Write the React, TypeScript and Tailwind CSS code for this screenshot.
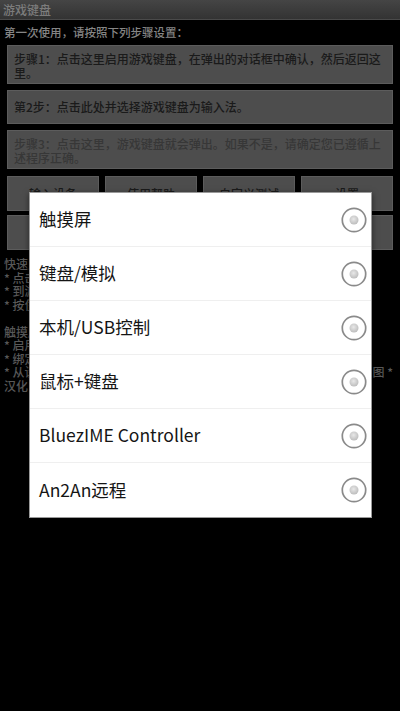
import React from "react";

const font = { fontFamily: '"Noto Sans CJK SC", "Noto Sans", sans-serif' };

function Radio() {
  return (
    <svg width="26" height="26" viewBox="0 0 26 26" className="shrink-0">
      <defs>
        <radialGradient id="rg" cx="45%" cy="40%" r="60%">
          <stop offset="0%" stopColor="#e8e8e8" />
          <stop offset="100%" stopColor="#bdbdbd" />
        </radialGradient>
      </defs>
      <circle cx="13" cy="13" r="11.7" fill="#fff" stroke="#8a8a8a" strokeWidth="1.7" />
      <circle cx="13" cy="13" r="4.5" fill="url(#rg)" />
    </svg>
  );
}

const options = [
  "触摸屏",
  "键盘/模拟",
  "本机/USB控制",
  "鼠标+键盘",
  "BluezIME Controller",
  "An2An远程",
];

export default function App() {
  return (
    <div className="relative w-[400px] h-[711px] overflow-hidden bg-black" style={font}>
      {/* title bar */}
      <div className="h-[20px] bg-gradient-to-b from-[#454545] to-[#333333] border-b border-[#4a4a4a] flex items-center px-[3px]">
        <span className="text-[12px] leading-none font-medium text-[#7c7c7c]">游戏键盘</span>
      </div>
      <div className="px-[4px] pt-[5px] h-[25px] text-[11.5px] leading-[14px] font-medium text-[#858585]">
        第一次使用，请按照下列步骤设置：
      </div>
      <div className="px-[7px] flex flex-col gap-[6px]">
        <div className="h-[39px] bg-[#4d4d4d] border border-[#5c5c5c] px-[6px] pt-[6px] text-[12px] leading-[14px] font-medium text-[#1a1a1a]">
          步骤1：点击这里启用游戏键盘，在弹出的对话框中确认，然后返回这里。
        </div>
        <div className="h-[34px] bg-[#4d4d4d] border border-[#5c5c5c] px-[6px] flex items-center text-[12px] leading-[14px] font-medium text-[#1a1a1a]">
          第2步：点击此处并选择游戏键盘为输入法。
        </div>
        <div className="h-[39px] bg-[#4d4d4d] border border-[#5c5c5c] px-[6px] pt-[6px] text-[12px] leading-[14px] font-medium text-[#373737]">
          步骤3：点击这里，游戏键盘就会弹出。如果不是，请确定您已遵循上述程序正确。
        </div>
        <div className="grid grid-cols-4 gap-[6px] mt-[1px]">
          {["输入设备", "使用帮助", "自定义测试", "设置"].map((t) => (
            <div key={t} className="h-[35px] bg-[#4d4d4d] border border-[#5c5c5c] flex items-center justify-center text-[12px] font-medium text-[#1a1a1a]">
              {t}
            </div>
          ))}
        </div>
        <div className="grid grid-cols-4 gap-[6px] -mt-[2px]">
          {["关于", "帮助", "配置", "退出"].map((t) => (
            <div key={t} className="h-[35px] bg-[#4d4d4d] border border-[#5c5c5c] flex items-center justify-center text-[12px] font-medium text-[#1a1a1a]">
              {t}
            </div>
          ))}
        </div>
      </div>
      <div className="px-[4px] pt-[7px] text-[12px] leading-[13.5px] font-medium text-[#585858] whitespace-nowrap">
        <div>快速入门：</div>
        <div>* 点击上方按钮启用游戏键盘并选择输入法</div>
        <div>* 到游戏中长按输入框切换输入法</div>
        <div>* 按住菜单键可以打开设置界面</div>
        <div className="h-[13.5px]" />
        <div>触摸屏模式：</div>
        <div>* 启用触摸屏模式后将在屏幕上显示按键</div>
        <div>* 绑定按键到屏幕上的任意位置</div>
        <div>* 从设置菜单中选择布局文件并保存到手机存储卡上以便在游戏中使用图 *</div>
        <div>汉化：游戏键盘中文版</div>
      </div>

      {/* dialog */}
      <div className="absolute left-[29px] top-[192px] w-[343px] bg-white border border-[#9a9a9a] shadow-[0_2px_6px_rgba(0,0,0,0.5)]">
        {options.map((o, i) => (
          <div
            key={o}
            className={
              "h-[54px] flex items-center justify-between pl-[9px] pr-[4px] " +
              (i < options.length - 1 ? "border-b border-[#efefef]" : "")
            }
          >
            <span className="text-[17.5px] text-[#151515]">{o}</span>
            <Radio />
          </div>
        ))}
      </div>
    </div>
  );
}
